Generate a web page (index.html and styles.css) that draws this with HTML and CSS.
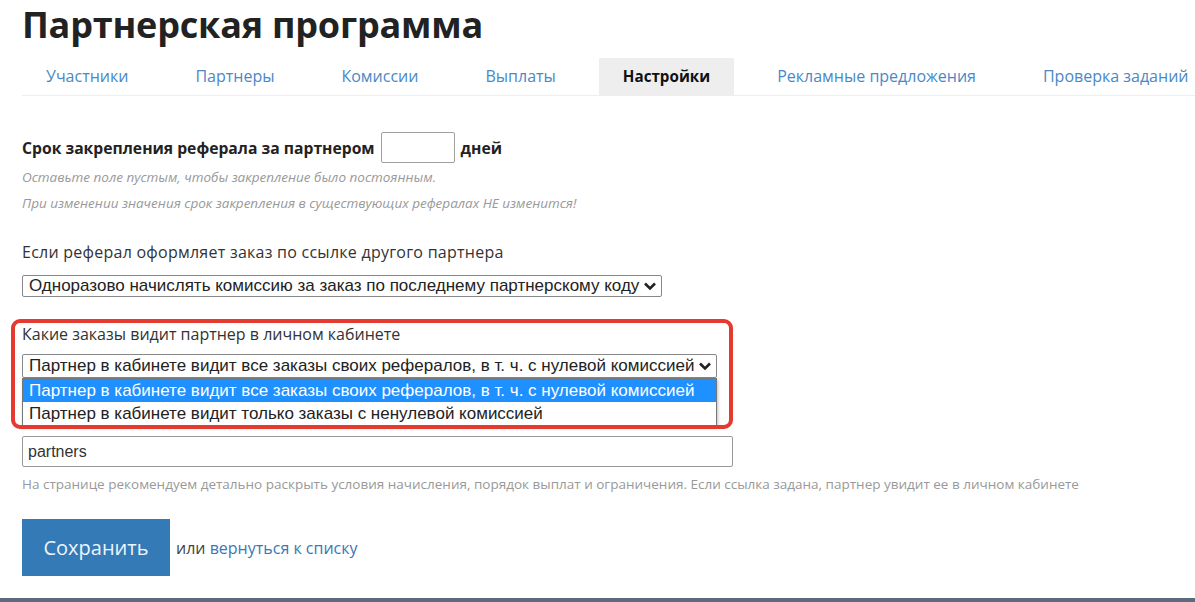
FILE: index.html
```html
<!DOCTYPE html>
<html lang="ru">
<head>
<meta charset="utf-8">
<title>Партнерская программа</title>
<link rel="stylesheet" href="styles.css">
</head>
<body>
<div class="page">
  <h1 class="title">Партнерская программа</h1>
  <nav class="tabs">
    <a class="tab" href="#">Участники</a>
    <a class="tab" href="#">Партнеры</a>
    <a class="tab" href="#">Комиссии</a>
    <a class="tab" href="#">Выплаты</a>
    <a class="tab active" href="#">Настройки</a>
    <a class="tab" href="#">Рекламные предложения</a>
    <a class="tab" href="#">Проверка заданий</a>
  </nav>

  <form class="settings">
    <div class="inline-field">
      <span class="strong">Срок закрепления реферала за партнером</span>
      <span class="days-input"></span>
      <span class="strong">дней</span>
    </div>
    <p class="note first">Оставьте поле пустым, чтобы закрепление было постоянным.</p>
    <p class="note">При изменении значения срок закрепления в существующих рефералах НЕ изменится!</p>

    <div class="field">
      <div class="label wide">Если реферал оформляет заказ по ссылке другого партнера</div>
      <div class="select">
        <span class="select-text">Одноразово начислять комиссию за заказ по последнему партнерскому коду</span>
        <svg class="chevron" width="14" height="10" viewBox="0 0 14 10"><path d="M2 2.5 L7 7.5 L12 2.5" fill="none" stroke="#222" stroke-width="2.6"/></svg>
      </div>
    </div>

    <div class="field marked">
      <div class="label">Какие заказы видит партнер в личном кабинете</div>
      <div class="select-wrap">
        <div class="select tall">
          <span class="select-text">Партнер в кабинете видит все заказы своих рефералов, в т. ч. с нулевой комиссией</span>
          <svg class="chevron" width="14" height="10" viewBox="0 0 14 10"><path d="M2 2.5 L7 7.5 L12 2.5" fill="none" stroke="#222" stroke-width="2.6"/></svg>
        </div>
        <ul class="dropdown">
          <li class="option selected">Партнер в кабинете видит все заказы своих рефералов, в т. ч. с нулевой комиссией</li>
          <li class="option">Партнер в кабинете видит только заказы с ненулевой комиссией</li>
        </ul>
      </div>
    </div>

    <div class="field link-field">
      <div class="text-input">partners</div>
      <p class="hint">На странице рекомендуем детально раскрыть условия начисления, порядок выплат и ограничения. Если ссылка задана, партнер увидит ее в личном кабинете</p>
    </div>

    <div class="actions">
      <button type="button" class="btn-save">Сохранить</button>
      <span class="or">или <a href="#" class="back">вернуться к списку</a></span>
    </div>
  </form>
</div>
<div class="bottom-bar"></div>
</body>
</html>
```
FILE: styles.css
```css
*, *::before, *::after { box-sizing: border-box; }
html, body { margin: 0; padding: 0; }
body {
  font-family: "Open Sans", "Noto Sans", sans-serif;
  color: #333;
  background: #fff;
  overflow: hidden;
}
.page {
  height: 598px;
  padding-left: 22px;
  padding-top: 3px;
}
.title {
  margin: 0;
  font-size: 36px;
  line-height: 44px;
  font-weight: 700;
  color: #222;
  letter-spacing: -0.2px;
}
.tabs {
  margin-top: 11px;
  display: flex;
  gap: 19px;
  border-bottom: 1px solid #eee;
  height: 38px;
  white-space: nowrap;
}
.tab {
  display: block;
  padding: 0 24px;
  line-height: 36px;
  font-size: 16px;
  color: #4a88c7;
  text-decoration: none;
}
.tab.active {
  background: #eee;
  color: #111;
  font-weight: 700;
  font-size: 15.2px;
}
.settings {
  margin-top: 36px;
}
.inline-field {
  display: flex;
  align-items: center;
  gap: 6px;
  height: 31px;
}
.strong {
  font-weight: 700;
  font-size: 15.7px;
  color: #222;
}
.days-input {
  width: 74px;
  height: 31px;
  border: 1px solid #a0a0a0;
  border-radius: 2px;
}
.note {
  margin: 0;
  font-size: 13.5px;
  font-style: italic;
  color: #999;
  line-height: 26px;
}
.note.first { margin-top: 1px; }
.field { margin-top: 26px; }
.label {
  font-size: 16px;
  line-height: 20px;
  color: #333;
}
.label.wide { letter-spacing: 0.25px; }
.select {
  margin-top: 13px;
  display: inline-flex;
  align-items: center;
  height: 22px;
  padding: 0 4px 0 6px;
  border: 1px solid #888;
  border-radius: 2px;
  font-family: "Liberation Sans", Arial, sans-serif;
  font-size: 17px;
  color: #222;
  background: #fff;
}
.select.tall { height: 24px; margin-top: 10px; }
.chevron { margin-left: 4px; }
.field.marked {
  margin-top: 27px;
  position: relative;
}
.field.marked::before {
  content: "";
  position: absolute;
  left: -11px;
  top: -5px;
  width: 722px;
  height: 110px;
  border: 4px solid #e53a30;
  border-radius: 9px;
  pointer-events: none;
  z-index: 3;
}
.select-wrap {
  position: relative;
  display: inline-block;
}
.dropdown {
  position: absolute;
  left: 0;
  right: 0;
  top: 100%;
  margin: 0;
  padding: 0;
  list-style: none;
  background: #fff;
  border: 1px solid #767676;
  box-shadow: 1px 2px 3px rgba(0,0,0,0.25);
  font-family: "Liberation Sans", Arial, sans-serif;
  font-size: 17px;
  color: #222;
  z-index: 2;
}
.option {
  height: 23px;
  line-height: 23px;
  padding-left: 6px;
  white-space: nowrap;
}
.option.selected {
  background: #1e90ff;
  color: #fff;
}
.link-field { margin-top: 58px; }
.text-input {
  width: 711px;
  height: 31px;
  border: 1px solid #999;
  border-radius: 2px;
  padding-left: 5px;
  line-height: 29px;
  font-family: "Liberation Sans", Arial, sans-serif;
  font-size: 16px;
  color: #333;
}
.hint {
  margin: 7px 0 0;
  font-size: 13.5px;
  line-height: 20px;
  color: #999;
  white-space: nowrap;
}
.actions {
  margin-top: 25px;
  display: flex;
  align-items: center;
  gap: 6px;
}
.btn-save {
  width: 148px;
  height: 57px;
  border: none;
  background: #337ab7;
  color: #eef4fa;
  font-family: "Open Sans", sans-serif;
  font-size: 20px;
  padding: 0;
}
.or {
  font-size: 16px;
  color: #444;
}
.back {
  color: #3a78b5;
  text-decoration: none;
}
.bottom-bar {
  height: 4px;
  background: #5b6b7b;
}
```
